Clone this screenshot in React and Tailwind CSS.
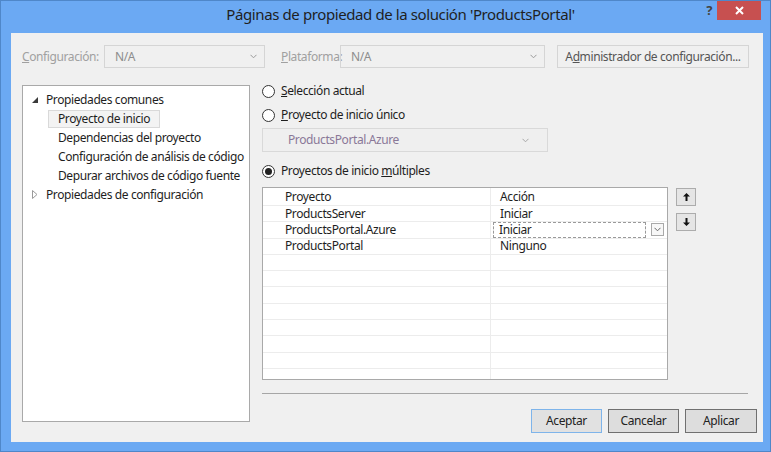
import React from 'react';

function Chevron({ color = '#9a9a9a' }) {
  return (
    <svg width="7" height="5" viewBox="0 0 7 5" className="shrink-0">
      <path d="M0.5 0.8 L3.5 3.8 L6.5 0.8" fill="none" stroke={color} strokeWidth="1" />
    </svg>
  );
}

function Radio({ checked, children }) {
  return (
    <div className="flex items-center h-[16px]">
      <div className="w-[13px] h-[13px] rounded-full border border-[#333] bg-white flex items-center justify-center">
        {checked && <div className="w-[7px] h-[7px] rounded-full bg-[#222]" />}
      </div>
      <span className="ml-[6px] text-[#1e1e1e]">{children}</span>
    </div>
  );
}

function Arrow({ down }) {
  return (
    <svg width="7" height="8" viewBox="0 0 7 8" className={down ? 'rotate-180' : ''}>
      <path d="M3.5 0 L7 3.5 L4.5 3.5 L4.5 8 L2.5 8 L2.5 3.5 L0 3.5 Z" fill="#111" />
    </svg>
  );
}

const rows = [
  ['ProductsServer', 'Iniciar'],
  ['ProductsPortal.Azure', 'Iniciar', true],
  ['ProductsPortal', 'Ninguno'],
  [], [], [], [], [], [], [], [], [],
];

export default function App() {
  return (
    <div className="w-[771px] h-[452px] bg-[#6ba9f3] border border-[#4f87c9] flex flex-col font-['Noto_Sans',sans-serif] text-[12px] leading-[16px] tracking-[-0.4px] whitespace-nowrap overflow-hidden">
      {/* title bar */}
      <div className="h-[32px] relative shrink-0">
        <div className="flex justify-center pl-[30px] pt-[3px] text-[15px] leading-[20px] tracking-[-0.4px] text-[#1f1f1f]">
          Páginas de propiedad de la solución 'ProductsPortal'
        </div>
        <div className="absolute top-0 right-[9px] flex items-start">
          <span className="mt-[1px] mr-[5px] text-[13px] leading-[16px] font-bold text-[#444]">?</span>
          <div className="w-[44px] h-[19px] bg-[#c75050] flex items-center justify-center">
            <svg width="9" height="9" viewBox="0 0 9 9">
              <path d="M1 1 L8 8 M8 1 L1 8" stroke="#fff" strokeWidth="2" />
            </svg>
          </div>
        </div>
      </div>

      {/* content */}
      <div className="ml-[10px] mr-[7px] mb-[9px] flex-1 bg-[#f0f0f0] flex flex-col">
        <div className="mt-[12px] h-[23px] flex items-center text-[#a0a0a0]">
          <span className="ml-[11px] w-[82px]"><u>C</u>onfiguración:</span>
          <div className="w-[161px] h-[23px] border border-[#d5d5d5] flex items-center justify-between pl-[10px] pr-[7px] text-[#8d8d8d]">
            <span>N/A</span>
            <Chevron />
          </div>
          <span className="ml-[16px] w-[59px]"><u>P</u>lataforma:</span>
          <div className="w-[205px] h-[23px] border border-[#d5d5d5] flex items-center justify-between pl-[10px] pr-[7px] text-[#8d8d8d]">
            <span>N/A</span>
            <Chevron />
          </div>
          <div className="ml-[12px] w-[192px] h-[23px] border border-[#d5d5d5] flex items-center justify-center text-[#555]">
            A<u>d</u>ministrador de configuración...
          </div>
        </div>

        <div className="mt-[17px] flex items-start">
          {/* tree */}
          <div className="ml-[11px] w-[228px] h-[337px] bg-white border border-[#a9a9a9] pt-[4px] text-[#1e1e1e]">
            <div className="h-[19px] flex items-center pl-[9px]">
              <svg width="6" height="6" viewBox="0 0 6 6">
                <path d="M6 0 L6 6 L0 6 Z" fill="#3a3a3a" />
              </svg>
              <span className="ml-[8px]">Propiedades comunes</span>
            </div>
            <div className="h-[19px] flex items-center">
              <span className="ml-[25px] h-[18px] px-[9px] border border-[#d9d9d9] bg-[#f3f3f3] flex items-center">Proyecto de inicio</span>
            </div>
            {['Dependencias del proyecto', 'Configuración de análisis de código', 'Depurar archivos de código fuente'].map((t) => (
              <div key={t} className="h-[19px] flex items-center">
                <span className="ml-[25px] px-[9px] border border-transparent">{t}</span>
              </div>
            ))}
            <div className="h-[19px] flex items-center pl-[9px]">
              <svg width="6" height="9" viewBox="0 0 6 9">
                <path d="M0.5 0.5 L5 4.5 L0.5 8.5 Z" fill="none" stroke="#9a9a9a" strokeWidth="1" />
              </svg>
              <span className="ml-[8px]">Propiedades de configuración</span>
            </div>
          </div>

          {/* right column */}
          <div className="ml-[12px] w-[495px] -mt-[2px] flex flex-col">
            <Radio><u>S</u>elección actual</Radio>
            <div className="mt-[8px]">
              <Radio><u>P</u>royecto de inicio único</Radio>
            </div>
            <div className="mt-[5px] w-[286px] h-[24px] border border-[#d9d9d9] bg-[#efefef] flex items-center justify-between pl-[25px] pr-[18px] text-[#8a7898]">
              <span>ProductsPortal.Azure</span>
              <Chevron color="#a8a8a8" />
            </div>
            <div className="mt-[11px]">
              <Radio checked>Proyectos de inicio <u>m</u>últiples</Radio>
            </div>

            <div className="mt-[8px] flex items-start">
              <div className="w-[406px] h-[193px] border border-[#a9a9a9] bg-white flex flex-col overflow-hidden text-[#1e1e1e]">
                <div className="h-[17px] shrink-0 flex">
                  <div className="w-[228px] border-r border-[#ececec] pl-[22px] flex items-center">Proyecto</div>
                  <div className="flex-1 pl-[9px] flex items-center">Acción</div>
                </div>
                {rows.map((r, i) => (
                  <div key={i} className="h-[16.3px] shrink-0 flex border-t border-[#ececec]">
                    <div className="w-[228px] border-r border-[#ececec] pl-[22px] flex items-center">{r[0]}</div>
                    {r[2] ? (
                      <div className="flex-1 flex items-center pl-[2px]">
                        <div className="w-[153px] h-[16px] border border-dashed border-[#9a9a9a] pl-[5px] flex items-center">{r[1]}</div>
                        <div className="ml-[5px] w-[13px] h-[13px] border border-[#a9a9a9] bg-[#f7f7f7] flex items-center justify-center">
                          <Chevron color="#666" />
                        </div>
                      </div>
                    ) : (
                      <div className="flex-1 pl-[9px] flex items-center">{r[1]}</div>
                    )}
                  </div>
                ))}
              </div>
              <div className="ml-[8px] flex flex-col">
                <div className="mt-[1px] w-[20px] h-[18px] border border-[#acacac] bg-[#e5e5e5] flex items-center justify-center">
                  <Arrow />
                </div>
                <div className="mt-[7px] w-[20px] h-[18px] border border-[#acacac] bg-[#e5e5e5] flex items-center justify-center">
                  <Arrow down />
                </div>
              </div>
            </div>

            <div className="mt-[13px] w-[486px] h-px bg-[#a6a6a6]" />

            <div className="mt-[15px] flex justify-end gap-[6px] text-[#222]">
              <div className="w-[71px] h-[24px] border border-[#7eb4ea] bg-[#e1e1e1] flex items-center justify-center">Aceptar</div>
              <div className="w-[71px] h-[24px] border border-[#707070] bg-[#dddddd] flex items-center justify-center">Cancelar</div>
              <div className="w-[72px] h-[24px] border border-[#707070] bg-[#dddddd] flex items-center justify-center">Aplicar</div>
            </div>
          </div>
        </div>
      </div>
    </div>
  );
}
